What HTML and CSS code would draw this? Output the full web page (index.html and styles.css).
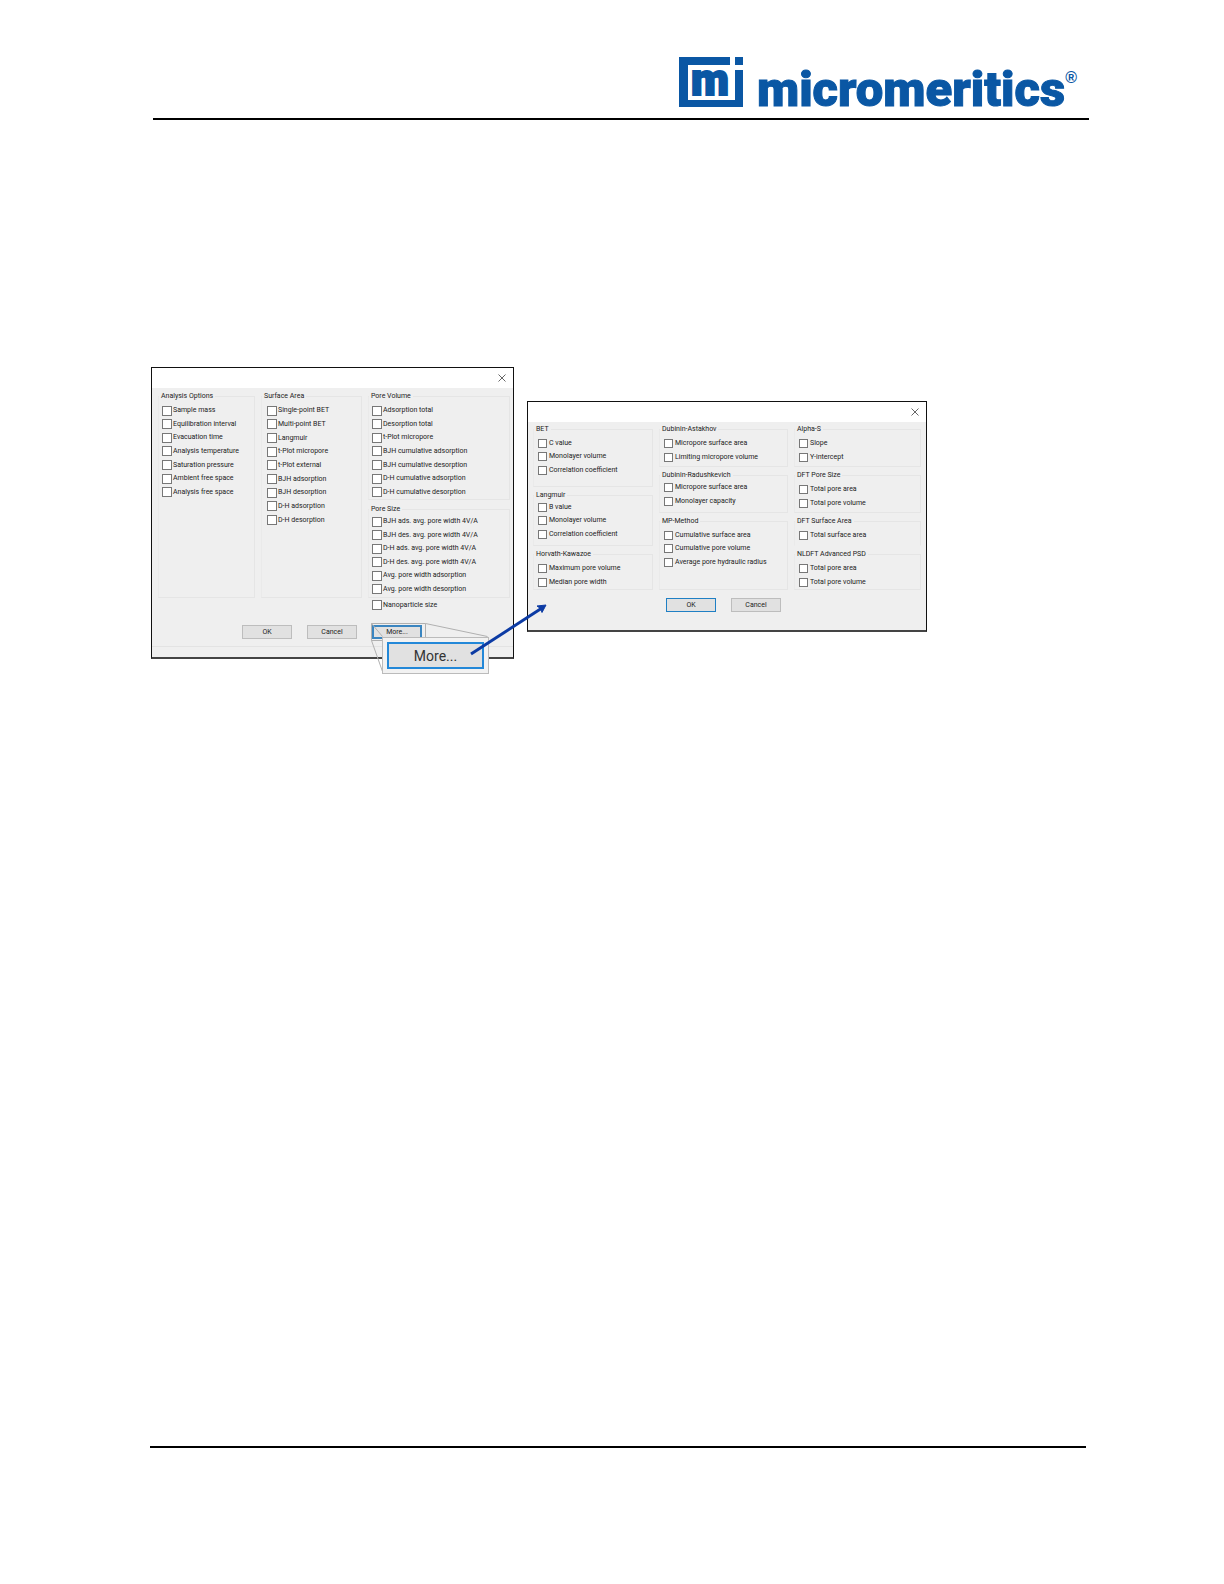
FILE: index.html
```html
<!DOCTYPE html>
<html lang="en">
<head>
<meta charset="utf-8">
<title>Micromeritics</title>
<link rel="stylesheet" href="styles.css">
</head>
<body>
<div class="page">
  <header class="page-header">
    <div class="logo">
      <svg class="logo-mark" width="64" height="50" viewBox="0 0 64 50" aria-hidden="true">
        <path fill="#0a57a4" d="M0 0H51V8H9V43H56V13H64V50H0Z"/>
        <rect fill="#0a57a4" x="56" y="0" width="8" height="8"/>
        <text class="logo-m" x="12" y="38">m</text>
      </svg>
      <span class="logo-name">micromeritics</span><span class="logo-reg">®</span>
    </div>
  </header>

  <main class="content">
    <div class="figure">
      <section class="dialog dialog-report" aria-label="Report options">
        <div class="titlebar">
          <button class="close" type="button" aria-label="Close"><svg width="8" height="8" viewBox="0 0 8 8"><path d="M0.5 0.5L7.5 7.5M7.5 0.5L0.5 7.5"/></svg></button>
        </div>
        <div class="columns">
          <fieldset class="group">
            <legend>Analysis Options</legend>
            <div class="options rows-7">
              <label><input type="checkbox">Sample mass</label>
              <label><input type="checkbox">Equilibration interval</label>
              <label><input type="checkbox">Evacuation time</label>
              <label><input type="checkbox">Analysis temperature</label>
              <label><input type="checkbox">Saturation pressure</label>
              <label><input type="checkbox">Ambient free space</label>
              <label><input type="checkbox">Analysis free space</label>
            </div>
          </fieldset>
          <fieldset class="group">
            <legend>Surface Area</legend>
            <div class="options rows-9">
              <label><input type="checkbox">Single-point BET</label>
              <label><input type="checkbox">Multi-point BET</label>
              <label><input type="checkbox">Langmuir</label>
              <label><input type="checkbox">t-Plot micropore</label>
              <label><input type="checkbox">t-Plot external</label>
              <label><input type="checkbox">BJH adsorption</label>
              <label><input type="checkbox">BJH desorption</label>
              <label><input type="checkbox">D-H adsorption</label>
              <label><input type="checkbox">D-H desorption</label>
            </div>
          </fieldset>
          <div class="stack stack-pores">
            <fieldset class="group">
              <legend>Pore Volume</legend>
              <div class="options rows-7">
                <label><input type="checkbox">Adsorption total</label>
                <label><input type="checkbox">Desorption total</label>
                <label><input type="checkbox">t-Plot micropore</label>
                <label><input type="checkbox">BJH cumulative adsorption</label>
                <label><input type="checkbox">BJH cumulative desorption</label>
                <label><input type="checkbox">D-H cumulative adsorption</label>
                <label><input type="checkbox">D-H cumulative desorption</label>
              </div>
            </fieldset>
            <fieldset class="group tight">
              <legend>Pore Size</legend>
              <div class="options rows-6">
                <label><input type="checkbox">BJH ads. avg. pore width 4V/A</label>
                <label><input type="checkbox">BJH des. avg. pore width 4V/A</label>
                <label><input type="checkbox">D-H ads. avg. pore width 4V/A</label>
                <label><input type="checkbox">D-H des. avg. pore width 4V/A</label>
                <label><input type="checkbox">Avg. pore width adsorption</label>
                <label><input type="checkbox">Avg. pore width desorption</label>
              </div>
            </fieldset>
          </div>
          <label class="single"><input type="checkbox">Nanoparticle size</label>
        </div>
        <div class="actions">
          <button class="btn" type="button">OK</button>
          <button class="btn" type="button">Cancel</button>
          <button class="btn btn-focus" type="button">More...</button>
        </div>
        <div class="statusbar"></div>
      </section>

      <section class="dialog dialog-more" aria-label="More options">
        <div class="titlebar">
          <button class="close" type="button" aria-label="Close"><svg width="8" height="8" viewBox="0 0 8 8"><path d="M0.5 0.5L7.5 7.5M7.5 0.5L0.5 7.5"/></svg></button>
        </div>
        <div class="columns">
          <div class="stack stack-left">
            <fieldset class="group">
              <legend>BET</legend>
              <div class="options rows-3">
                <label><input type="checkbox">C value</label>
                <label><input type="checkbox">Monolayer volume</label>
                <label><input type="checkbox">Correlation coefficient</label>
              </div>
            </fieldset>
            <fieldset class="group tight">
              <legend>Langmuir</legend>
              <div class="options rows-3">
                <label><input type="checkbox">B value</label>
                <label><input type="checkbox">Monolayer volume</label>
                <label><input type="checkbox">Correlation coefficient</label>
              </div>
            </fieldset>
            <fieldset class="group">
              <legend>Horvath-Kawazoe</legend>
              <div class="options rows-2">
                <label><input type="checkbox">Maximum pore volume</label>
                <label><input type="checkbox">Median pore width</label>
              </div>
            </fieldset>
          </div>
          <div class="stack stack-middle">
            <fieldset class="group">
              <legend>Dubinin-Astakhov</legend>
              <div class="options rows-2">
                <label><input type="checkbox">Micropore surface area</label>
                <label><input type="checkbox">Limiting micropore volume</label>
              </div>
            </fieldset>
            <fieldset class="group tight">
              <legend>Dubinin-Radushkevich</legend>
              <div class="options rows-2">
                <label><input type="checkbox">Micropore surface area</label>
                <label><input type="checkbox">Monolayer capacity</label>
              </div>
            </fieldset>
            <fieldset class="group">
              <legend>MP-Method</legend>
              <div class="options rows-3">
                <label><input type="checkbox">Cumulative surface area</label>
                <label><input type="checkbox">Cumulative pore volume</label>
                <label><input type="checkbox">Average pore hydraulic radius</label>
              </div>
            </fieldset>
          </div>
          <div class="stack stack-right">
            <fieldset class="group">
              <legend>Alpha-S</legend>
              <div class="options rows-2">
                <label><input type="checkbox">Slope</label>
                <label><input type="checkbox">Y-intercept</label>
              </div>
            </fieldset>
            <fieldset class="group">
              <legend>DFT Pore Size</legend>
              <div class="options rows-2">
                <label><input type="checkbox">Total pore area</label>
                <label><input type="checkbox">Total pore volume</label>
              </div>
            </fieldset>
            <fieldset class="group open">
              <legend>DFT Surface Area</legend>
              <div class="options rows-1">
                <label><input type="checkbox">Total surface area</label>
              </div>
            </fieldset>
            <fieldset class="group">
              <legend>NLDFT Advanced PSD</legend>
              <div class="options rows-2">
                <label><input type="checkbox">Total pore area</label>
                <label><input type="checkbox">Total pore volume</label>
              </div>
            </fieldset>
          </div>
        </div>
        <div class="actions">
          <button class="btn btn-default" type="button">OK</button>
          <button class="btn" type="button">Cancel</button>
        </div>
      </section>

      <svg class="callout-lines" width="118" height="50" viewBox="0 0 118 50" aria-hidden="true">
        <path d="M0.5 17.5V0.5H54.5V17.5H0.5L11.5 48.5M0.5 0.5L11.5 13.5M54.5 0.5L116.5 13.5"/>
      </svg>
      <div class="callout"><button class="btn-large" type="button">More...</button></div>
      <svg class="arrow" width="80" height="56" viewBox="0 0 80 56" aria-hidden="true">
        <path class="shaft" d="M2 52L73 6"/>
        <path class="head" d="M77 3L73 10.500L71.500 6.500L68 4Z"/>
      </svg>
    </div>
  </main>

  <footer class="page-footer"></footer>
</div>
</body>
</html>
```
FILE: styles.css
```css
* { box-sizing: border-box; }

body {
  margin: 0;
  background: #fff;
  color: #222;
  font: 7px/9px Roboto, "Noto Sans", sans-serif;
}

.page {
  display: flex;
  flex-direction: column;
  min-height: 100vh;
  padding-bottom: 136px;
}

/* Header and logo */
.page-header {
  display: flex;
  justify-content: flex-end;
  margin: 0 135px 0 153px;
  padding: 57px 12px 11px 0;
  border-bottom: 2px solid #000;
}

.logo {
  display: flex;
  align-items: flex-start;
  height: 50px;
  color: #0a57a4;
}

.logo-mark {
  margin-right: 14px;
  overflow: visible;
}

.logo-m {
  fill: #0a57a4;
  stroke: #0a57a4;
  stroke-width: 2px;
  font: 900 44px Roboto, sans-serif;
}

.logo-name {
  font: 900 49px/66px Roboto, sans-serif;
  -webkit-text-stroke: 1px #0a57a4;
}

.logo-reg {
  padding-top: 13px;
  font: bold 16px/16px "Liberation Sans", sans-serif;
}

.content {
  flex: 1;
  padding: 247px 0 0 151px;
}

.page-footer {
  margin: 0 138px 0 150px;
  border-top: 2px solid #000;
}

/* Dialogs */
.figure {
  position: relative;
  display: flex;
  align-items: flex-start;
  gap: 13px;
}

.dialog {
  flex: none;
  background: #efefef;
  border: 1px solid #111;
  border-bottom: 2px solid #444;
}

.dialog-report { width: 363px; }

.dialog-more {
  width: 400px;
  margin-top: 34px;
}

.titlebar {
  display: flex;
  align-items: center;
  justify-content: flex-end;
  height: 20px;
  padding-right: 7px;
  background: #fff;
}

.close {
  display: flex;
  padding: 0;
  border: 0;
  background: none;
}

.close path {
  fill: none;
  stroke: #666;
}

.columns { display: grid; }

.dialog-report .columns {
  grid-template-columns: 97px 101px 1fr;
  grid-template-rows: 206px 14px;
  column-gap: 6px;
  padding: 4px 3px 0 6px;
}

.dialog-more .columns {
  grid-template-columns: 120px 129px 1fr;
  column-gap: 6px;
  padding: 3px 5px 0;
}

.stack {
  display: grid;
  row-gap: 4px;
}

.stack-pores {
  grid-template-rows: 108px 1fr;
  row-gap: 5px;
}

.stack-left { grid-template-rows: 62px 55px 40px; }
.stack-middle { grid-template-rows: 42px 42px 73px; }
.stack-right { grid-template-rows: 42px 42px 29px 40px; }

.group {
  min-width: 0;
  margin: 0;
  padding: 0;
  border: 1px solid #e5e5e5;
  border-left-color: #eaeaea;
}

.group.open { border-bottom-color: transparent; }

legend {
  padding: 0 2px;
  white-space: nowrap;
}

.options {
  display: grid;
  grid-auto-rows: 1fr;
  margin-top: 3px;
  padding-left: 3px;
}

.tight .options { margin-top: 1px; }

.rows-9,
.stack-right .options { padding-left: 5px; }

.dialog-more .options { padding-left: 4px; }

.rows-1 { height: 13px; }
.rows-2 { height: 27px; }
.rows-3 { height: 40px; }
.rows-6 { height: 81px; }
.rows-7 { height: 95px; }
.rows-9 { height: 123px; }

label {
  display: flex;
  align-items: center;
  gap: 2px;
  white-space: nowrap;
}

input[type="checkbox"] {
  appearance: none;
  flex: none;
  width: 9px;
  height: 9px;
  margin: 0;
  background: #fff;
  border: 1px solid #777;
}

.dialog-report label { gap: 1px; }

.dialog-report input[type="checkbox"] {
  width: 10px;
  height: 10px;
}

.single {
  grid-column: 3;
  padding-left: 4px;
}

/* Buttons */
.actions {
  display: flex;
  gap: 15px;
}

.dialog-report .actions { padding: 13px 0 0 90px; }
.dialog-more .actions { padding: 8px 0 18px 138px; }

.btn {
  width: 50px;
  height: 14px;
  padding: 0;
  color: #222;
  font: inherit;
  background: #e1e1e1;
  border: 1px solid #bdbdbd;
}

.btn-default { border-color: #1f7fc4; }

.btn-focus {
  border: 2px solid #3a85c0;
}

.statusbar {
  height: 11px;
  margin-top: 7px;
  border-top: 1px solid #e3e3e3;
}

/* Magnified button and arrow, drawn over the dialogs */
.callout-lines {
  position: absolute;
  left: 220px;
  top: 256px;
}

.callout-lines path {
  fill: none;
  stroke: #b0b0b0;
}

.callout {
  position: absolute;
  left: 231px;
  top: 270px;
  padding: 4px;
  background: #f2f2f2;
  border: 1px solid #bbb;
}

.btn-large {
  display: block;
  width: 97px;
  height: 27px;
  padding: 0;
  color: #333;
  font: 14px/16px Roboto, "Noto Sans", sans-serif;
  background: #e1e1e1;
  border: 2px solid #2388d8;
}

.arrow {
  position: absolute;
  left: 318px;
  top: 235px;
}

.shaft {
  fill: none;
  stroke: #0c3ba4;
  stroke-width: 3;
}

.head {
  fill: #0c3ba4;
  stroke: #0c3ba4;
}
```
